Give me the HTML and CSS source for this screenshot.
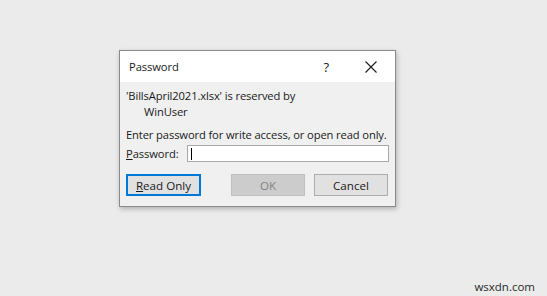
FILE: index.html
```html
<!DOCTYPE html>
<html>
<head>
<meta charset="utf-8">
<link rel="stylesheet" href="styles.css">
</head>
<body>
<div class="page">
  <div class="dialog">
    <div class="titlebar">
      <span class="title">Password</span>
      <span class="help">?</span>
      <svg class="close" width="12" height="12" viewBox="0 0 12 12"><path d="M0.5 0.5 L11.5 11.5 M11.5 0.5 L0.5 11.5" stroke="#1a1a1a" stroke-width="1.1" fill="none"/></svg>
    </div>
    <div class="content">
      <div class="msg">'BillsApril2021.xlsx' is reserved by</div>
      <div class="msg user">WinUser</div>
      <div class="msg enter">Enter password for write access, or open read only.</div>
      <div class="pwrow">
        <span class="label"><u>P</u>assword:</span>
        <div class="input"><span class="caret"></span></div>
      </div>
      <div class="buttons">
        <div class="btn default"><u>R</u>ead Only</div>
        <div class="btn disabled">OK</div>
        <div class="btn">Cancel</div>
      </div>
    </div>
  </div>
  <div class="watermark">wsxdn.com</div>
</div>
</body>
</html>
```

FILE: styles.css
```css
html, body {
  margin: 0;
  padding: 0;
  background: #ebebeb;
}
.page {
  width: 547px;
  height: 296px;
  padding: 50px 0 0 119px;
  box-sizing: border-box;
  position: relative;
  font-family: "Open Sans", "Noto Sans", sans-serif;
  font-size: 11.2px;
  color: #1a1a1a;
}
.dialog {
  width: 277px;
  height: 157px;
  box-sizing: border-box;
  border: 1px solid #8a8a8a;
  background: #f0f0f0;
  box-shadow: 1px 2px 5px rgba(0,0,0,0.25);
  display: flex;
  flex-direction: column;
}
.titlebar {
  height: 31px;
  background: #ffffff;
  display: flex;
  align-items: center;
  padding-left: 9px;
  flex-shrink: 0;
}
.title {
  flex: 1;
  letter-spacing: -0.1px;
}
.help {
  font-size: 13px;
  margin-right: 36px;
}
.close {
  margin-right: 18px;
}
.content {
  padding: 6px 0 0 6px;
  display: flex;
  flex-direction: column;
}
.msg {
  line-height: 16px;
  letter-spacing: -0.12px;
  white-space: nowrap;
}
.user {
  padding-left: 18px;
}
.enter {
  margin-top: 7px;
}
.pwrow {
  display: flex;
  align-items: center;
  margin-top: 2px;
  height: 17px;
}
.label {
  width: 61px;
  letter-spacing: -0.1px;
}
.input {
  width: 202px;
  height: 17px;
  box-sizing: border-box;
  border: 1px solid #a9a9a9;
  background: #ffffff;
  display: flex;
  align-items: center;
  padding-left: 3px;
}
.caret {
  width: 1px;
  height: 12px;
  background: #000;
}
.buttons {
  display: flex;
  margin-top: 12px;
}
.btn {
  width: 74px;
  height: 22px;
  box-sizing: border-box;
  border: 1px solid #adadad;
  background: #e1e1e1;
  display: flex;
  align-items: center;
  justify-content: center;
  font-size: 11.6px;
}
.btn.default {
  width: 75px;
  border: 2px solid #0078d7;
  margin-right: 30px;
}
.btn.disabled {
  color: #838383;
  background: #cccccc;
  border-color: #bfbfbf;
  margin-right: 9px;
}
.watermark {
  position: absolute;
  right: 12px;
  bottom: 2px;
  font-size: 11.5px;
  color: #2a2a2a;
}
```
